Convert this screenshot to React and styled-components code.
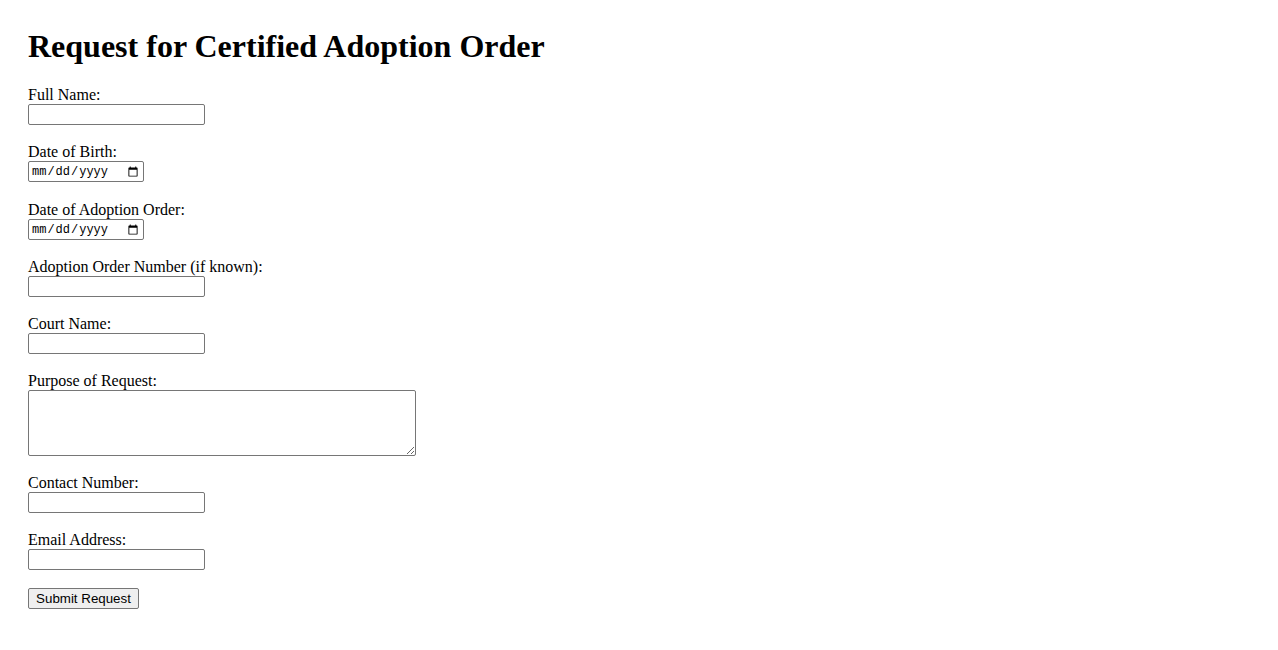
import React from "react";
import styled, { createGlobalStyle } from "styled-components";

const Global = createGlobalStyle`
  html, body { margin: 0; padding: 0; background: #fff; }
  body { padding: 28px; font-family: "Liberation Serif", "Times New Roman", serif; font-size: 16px; color: #000; }
`;

const Title = styled.h1`
  margin: 0 0 21.44px 0;
  font-family: "Liberation Serif", "Times New Roman", serif;
  font-size: 32px;
  font-weight: bold;
  line-height: normal;
`;

const Form = styled.form`
  display: flex;
  flex-direction: column;
  align-items: flex-start;
`;

const Field = styled.div`
  display: flex;
  flex-direction: column;
  align-items: flex-start;
  margin-bottom: ${(p) => p.$gap || 18}px;
`;

const Label = styled.label`
  display: block;
  font-size: 16px;
  line-height: 18px;
`;

const baseControl = `
  box-sizing: border-box;
  margin: 0;
  border: 1px solid #767676;
  border-radius: 2px;
  background: #fff;
  color: #000;
  font-size: 13.333px;
`;

const TextInput = styled.input`
  ${baseControl}
  display: block;
  width: 177px;
  height: 21px;
  padding: 1px 2px;
  font-family: "Liberation Sans", Arial, sans-serif;
`;

const DateInput = styled.input`
  ${baseControl}
  display: block;
  width: 116px;
  height: 21px;
  padding: 1px 2px;
  font-family: "Liberation Mono", "DejaVu Sans Mono", monospace;
  font-size: 12px;
`;

const TextArea = styled.textarea`
  ${baseControl}
  display: block;
  width: 388px;
  height: 66px;
  padding: 2px;
  font-family: "Liberation Mono", monospace;
  resize: both;
`;

const Button = styled.button`
  box-sizing: border-box;
  margin: 0;
  width: 111px;
  height: 21px;
  padding: 1px 6px;
  border: 1px solid #767676;
  border-radius: 2px;
  background: #efefef;
  color: #000;
  font-family: "Liberation Sans", Arial, sans-serif;
  font-size: 13.333px;
  line-height: normal;
`;

export default function App() {
  return (
    <>
      <Global />
      <Title>Request for Certified Adoption Order</Title>
      <Form onSubmit={(e) => e.preventDefault()}>
        <Field>
          <Label htmlFor="fullName">Full Name:</Label>
          <TextInput id="fullName" type="text" />
        </Field>
        <Field $gap={19}>
          <Label htmlFor="dob">Date of Birth:</Label>
          <DateInput id="dob" type="date" />
        </Field>
        <Field>
          <Label htmlFor="doa">Date of Adoption Order:</Label>
          <DateInput id="doa" type="date" />
        </Field>
        <Field>
          <Label htmlFor="aon">Adoption Order Number (if known):</Label>
          <TextInput id="aon" type="text" />
        </Field>
        <Field>
          <Label htmlFor="court">Court Name:</Label>
          <TextInput id="court" type="text" />
        </Field>
        <Field>
          <Label htmlFor="purpose">Purpose of Request:</Label>
          <TextArea id="purpose" />
        </Field>
        <Field>
          <Label htmlFor="contact">Contact Number:</Label>
          <TextInput id="contact" type="tel" />
        </Field>
        <Field>
          <Label htmlFor="email">Email Address:</Label>
          <TextInput id="email" type="email" />
        </Field>
        <Button type="submit">Submit Request</Button>
      </Form>
    </>
  );
}
